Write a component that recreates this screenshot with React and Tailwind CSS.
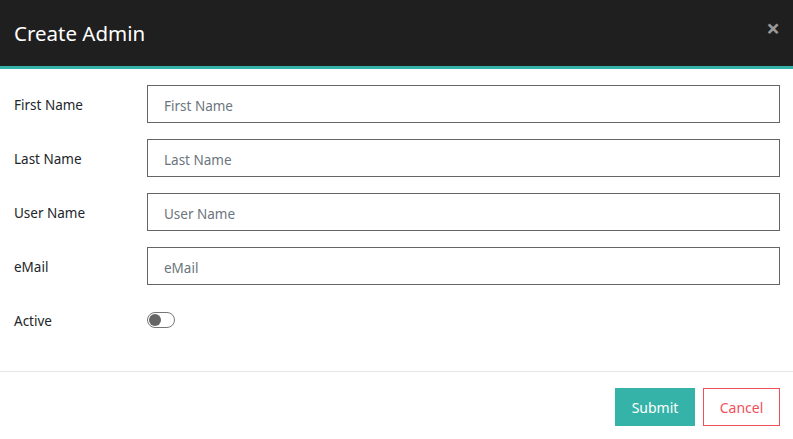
import { useState } from "react";

const FIELDS = ["First Name", "Last Name", "User Name", "eMail"];

function Toggle({ on, onChange }) {
  return (
    <button
      type="button"
      onClick={() => onChange(!on)}
      className={`relative h-[16px] w-[28px] rounded-full border ${
        on ? "border-[#36b3a8] bg-[#36b3a8]" : "border-[#777] bg-white"
      }`}
    >
      <span
        className={`absolute top-[1px] h-[12px] w-[12px] rounded-full ${
          on ? "left-[13px] bg-white" : "left-[1px] bg-[#666]"
        }`}
      />
    </button>
  );
}

export default function App() {
  const [active, setActive] = useState(false);

  return (
    <div className="min-h-[439px] bg-white font-['Noto_Sans',sans-serif] text-[#212529]">
      <div className="flex h-[69px] items-center justify-between border-b-[3px] border-[#36b3a8] bg-[#1f1f1f] pl-[14px] pr-[13px]">
        <h1 className="text-[20.5px] text-white">Create Admin</h1>
        <button className="pb-[10px] text-[24px] font-bold leading-none text-[#999]">×</button>
      </div>

      <div className="flex flex-col gap-[16px] px-[13px] pb-[32px] pt-[16px] pl-[14px]">
        {FIELDS.map((f) => (
          <div key={f} className="flex items-center">
            <label className="w-[133px] pt-[3px] text-[13.5px]">{f}</label>
            <input
              placeholder={f}
              className="h-[38px] flex-1 border border-[#666] px-[16px] pt-[3px] text-[13.5px] outline-none placeholder:text-[#6c757d]"
            />
          </div>
        ))}
        <div className="flex h-[38px] items-center">
          <label className="w-[133px] pt-[3px] text-[13.5px]">Active</label>
          <Toggle on={active} onChange={setActive} />
        </div>
      </div>

      <div className="flex justify-end gap-[8px] border-t border-[#e5e5e5] px-[13px] pb-[13px] pt-[16px]">
        <button className="h-[38px] w-[80px] bg-[#36b3a8] text-[14px] text-white">Submit</button>
        <button className="h-[38px] w-[77px] border border-[#f0505a] bg-white text-[14px] text-[#f0505a]">
          Cancel
        </button>
      </div>
    </div>
  );
}
